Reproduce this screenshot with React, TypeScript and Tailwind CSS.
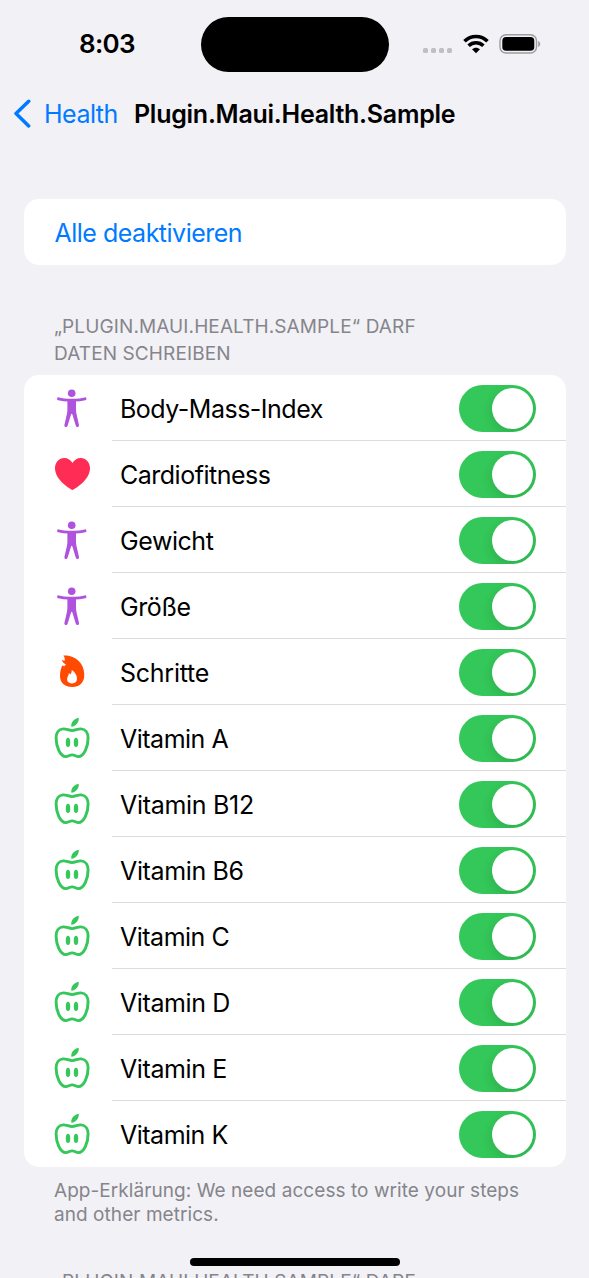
import { useState } from "react";

type IconName = "body" | "heart" | "flame" | "apple";

const metrics: { label: string; icon: IconName; tracking: string }[] = [
  { label: "Body-Mass-Index", icon: "body", tracking: "tracking-[-0.5px]" },
  { label: "Cardiofitness", icon: "heart", tracking: "tracking-[-0.5px]" },
  { label: "Gewicht", icon: "body", tracking: "tracking-[-0.45px]" },
  { label: "Größe", icon: "body", tracking: "tracking-[-0.4px]" },
  { label: "Schritte", icon: "flame", tracking: "tracking-[-0.25px]" },
  { label: "Vitamin A", icon: "apple", tracking: "tracking-[-0.5px]" },
  { label: "Vitamin B12", icon: "apple", tracking: "tracking-[-0.3px]" },
  { label: "Vitamin B6", icon: "apple", tracking: "tracking-[-0.35px]" },
  { label: "Vitamin C", icon: "apple", tracking: "tracking-[-0.5px]" },
  { label: "Vitamin D", icon: "apple", tracking: "tracking-[-0.4px]" },
  { label: "Vitamin E", icon: "apple", tracking: "tracking-[-0.4px]" },
  { label: "Vitamin K", icon: "apple", tracking: "tracking-[-0.5px]" },
];

function MetricIcon({ name }: { name: IconName }) {
  return (
    <svg viewBox="0 0 40 44" className="mt-px h-11 w-10 shrink-0" fill="none">
      {name === "body" && (
        <>
          <circle cx="19.700" cy="6.300" r="3.800" fill="#af52de" />
          <path
            d="M15.400 12H24V22.500C24 24 24.200 25.500 24.500 27L27 38C27.400 40.200 24.500 40.900 23.800 38.800L20.300 27.200C20.100 26.500 19.300 26.500 19.100 27.200L15.600 38.800C14.900 40.900 12 40.200 12.400 38L14.900 27C15.200 25.500 15.400 24 15.400 22.500Z"
            fill="#af52de"
          />
          <path
            d="M6.500 11.800Q12 13 16.500 13.100H23Q27.500 13 33 11.800"
            stroke="#af52de"
            strokeLinecap="round"
            strokeWidth="2.900"
          />
        </>
      )}
      {name === "heart" && (
        <path
          d="M20.500 36.900C19 36.600 3 27.200 3 15.200C3 9.400 7 5 12.200 5c3.700 0 6.600 2 8.300 5.100C22.200 7 25.100 5 28.800 5C34 5 38 9.400 38 15.200c0 12-16 21.400-17.500 21.700z"
          fill="#ff2d55"
        />
      )}
      {name === "flame" && (
        <path
          fillRule="evenodd"
          d="M11.300 4.600C21 3.700 32.300 10.500 32.300 24C32.300 31.500 27.600 36 20.300 36C12.800 36 8 31.600 8 25.200C8 20.800 8.900 17.200 10.500 14.200L12.200 15.600C12.600 14.700 13.200 14 14.200 13.300C12 12.500 10.400 11 9.900 8.900L12.700 9.700C13 7.800 12.500 6 11.300 4.600ZM19.700 19C20 20.900 19.300 22.300 18.200 23.500L16.800 22.100C16.900 23.500 16.300 24.500 15.700 25.800C14.100 29.500 15.900 32.400 20 32.400C23.100 32.400 25 30.500 25 27.700C25 24.200 22.600 20.700 19.700 19Z"
          fill="#ff4a00"
        />
      )}
      {name === "apple" && (
        <>
          <path
            d="M20.100 13.600C17 13.600 14.300 11.700 11.200 11.900C6.700 12.100 4.100 15.700 4.100 21.100C4.100 29 8 39.600 13.800 39.600C16.200 39.600 17.500 37.900 20.100 37.900C22.700 37.900 24 39.600 26.400 39.600C32.200 39.600 36.100 29 36.100 21.100C36.100 15.700 33.500 12.100 29 11.900C25.900 11.700 23.200 13.600 20.100 13.600Z"
            stroke="#34c759"
            strokeWidth="2.900"
          />
          <path
            d="M19.300 9.800C18.700 5.500 21.800 1.800 26.700.7C27.300 4.800 24.300 9.200 19.300 9.800Z"
            fill="#34c759"
          />
          <ellipse cx="16" cy="25.400" rx="2.200" ry="4.600" fill="#34c759" />
          <ellipse cx="24" cy="25.400" rx="2.200" ry="4.600" fill="#34c759" />
        </>
      )}
    </svg>
  );
}

function Toggle({ label }: { label: string }) {
  const [on, setOn] = useState(true);
  return (
    <button
      role="switch"
      aria-checked={on}
      aria-label={label}
      onClick={() => setOn(!on)}
      className={
        on
          ? "mt-px flex h-[46.500px] w-[76.500px] items-center justify-end overflow-hidden rounded-full bg-[#34c759] p-[3px]"
          : "mt-px flex h-[46.500px] w-[76.500px] items-center justify-start overflow-hidden rounded-full bg-[#e9e9ea] p-[3px]"
      }
    >
      <span className="size-[40.500px] rounded-full bg-white shadow-[0_4px_12px_rgba(0,0,0,0.13)]" />
    </button>
  );
}

function StatusBar() {
  return (
    <div className="flex h-[88px] items-start pt-4">
      <div className="w-[201px] pt-[10px] pl-[79px] text-[26px] leading-9 font-semibold tracking-[-0.700px]">
        8:03
      </div>
      <div className="mt-px h-[55px] w-[187.500px] rounded-full bg-black" />
      <div className="flex h-14 items-center pl-[34.500px]">
        <div className="mt-[13px] flex gap-[3px]">
          <i className="size-[5px] rounded-[1.500px] bg-[#bfbfc4]" />
          <i className="size-[5px] rounded-[1.500px] bg-[#bfbfc4]" />
          <i className="size-[5px] rounded-[1.500px] bg-[#bfbfc4]" />
          <i className="size-[5px] rounded-[1.500px] bg-[#bfbfc4]" />
        </div>
        <svg viewBox="0 0 26 20" className="ml-[11px] h-5 w-[26px]">
          <g fill="none" stroke="#000" strokeWidth="3.600">
            <path d="M1.500 7.300C7.900.900 18.100.900 24.500 7.300" />
            <path d="M5.600 11.700C9.800 7.700 16.200 7.700 20.400 11.700" />
          </g>
          <path d="M13 19.200L9 15.200C11.300 13.100 14.700 13.100 17 15.200Z" />
        </svg>
        <svg viewBox="0 0 42 20" className="ml-[10px] h-5 w-[42px]">
          <rect x="1" y=".700" width="36.500" height="18.300" rx="6" fill="none" stroke="#9c9ca1" strokeWidth="1.400" />
          <rect x="3.300" y="3" width="32" height="13.700" rx="3.800" />
          <path d="M39.200 7v6c1.200-.5 2-1.700 2-3s-.8-2.500-2-3z" fill="#9c9ca1" />
        </svg>
      </div>
    </div>
  );
}

export default function App() {
  return (
    <main className="relative h-[1278px] w-[589px] overflow-hidden bg-[#f2f1f6] font-['Inter','Liberation_Sans',sans-serif] text-[25px] text-black">
      <StatusBar />
      <nav className="flex h-[52px] items-center">
        <svg viewBox="0 0 18 30" className="ml-[13px] h-[30px] w-[18px]">
          <path d="M15.700 2.300L3 14.600L15.700 26.900" fill="none" stroke="#007aff" strokeWidth="3.500" strokeLinecap="round" strokeLinejoin="round" />
        </svg>
        <a className="ml-[13px] w-[90px] pt-[2px] whitespace-nowrap tracking-[-0.500px] text-[#007aff]">Health</a>
        <h1 className="pt-[2px] font-semibold whitespace-nowrap tracking-[-0.260px]">Plugin.Maui.Health.Sample</h1>
      </nav>

      <button className="mt-[59px] ml-6 flex h-[66px] w-[541.500px] items-center rounded-[15px] bg-white pt-[3px] pl-[30.500px] tracking-[-0.500px] text-[#007aff]">
        Alle deaktivieren
      </button>

      <h2 className="mt-[48px] ml-[54px] text-[19px] leading-[27px] tracking-[0.110px] text-[#85858b] uppercase">
        „Plugin.Maui.Health.Sample“ darf
        <br />
        Daten schreiben
      </h2>

      <ul className="mt-[8px] ml-6 w-[541.500px] overflow-hidden rounded-[15px] bg-white">
        {metrics.map((m, i) => (
          <li key={m.label} className="flex h-[66px] items-center pl-7">
            <MetricIcon name={m.icon} />
            <div
              className={
                i < metrics.length - 1
                  ? "ml-[20px] flex h-full flex-1 items-center justify-between border-b border-[#dcdcde] pt-px pr-[30px] pl-2"
                  : "ml-[20px] flex h-full flex-1 items-center justify-between pr-[30px] pl-2"
              }
            >
              <span className={`pt-[3px] ${m.tracking}`}>{m.label}</span>
              <Toggle label={m.label} />
            </div>
          </li>
        ))}
      </ul>

      <p className="mt-[12px] ml-[54px] text-[19px] leading-6 tracking-[0.060px] text-[#85858b]">
        App-Erklärung: We need access to write your steps
        <br />
        and other metrics.
      </p>
      <h2 className="mt-[41px] ml-[54px] text-[19px] leading-[27px] tracking-[0.110px] whitespace-nowrap text-[#85858b] uppercase">
        „Plugin.Maui.Health.Sample“ darf
      </h2>
      <div className="absolute top-[1258px] left-[190px] h-2 w-[210px] rounded-full bg-black" />
    </main>
  );
}
